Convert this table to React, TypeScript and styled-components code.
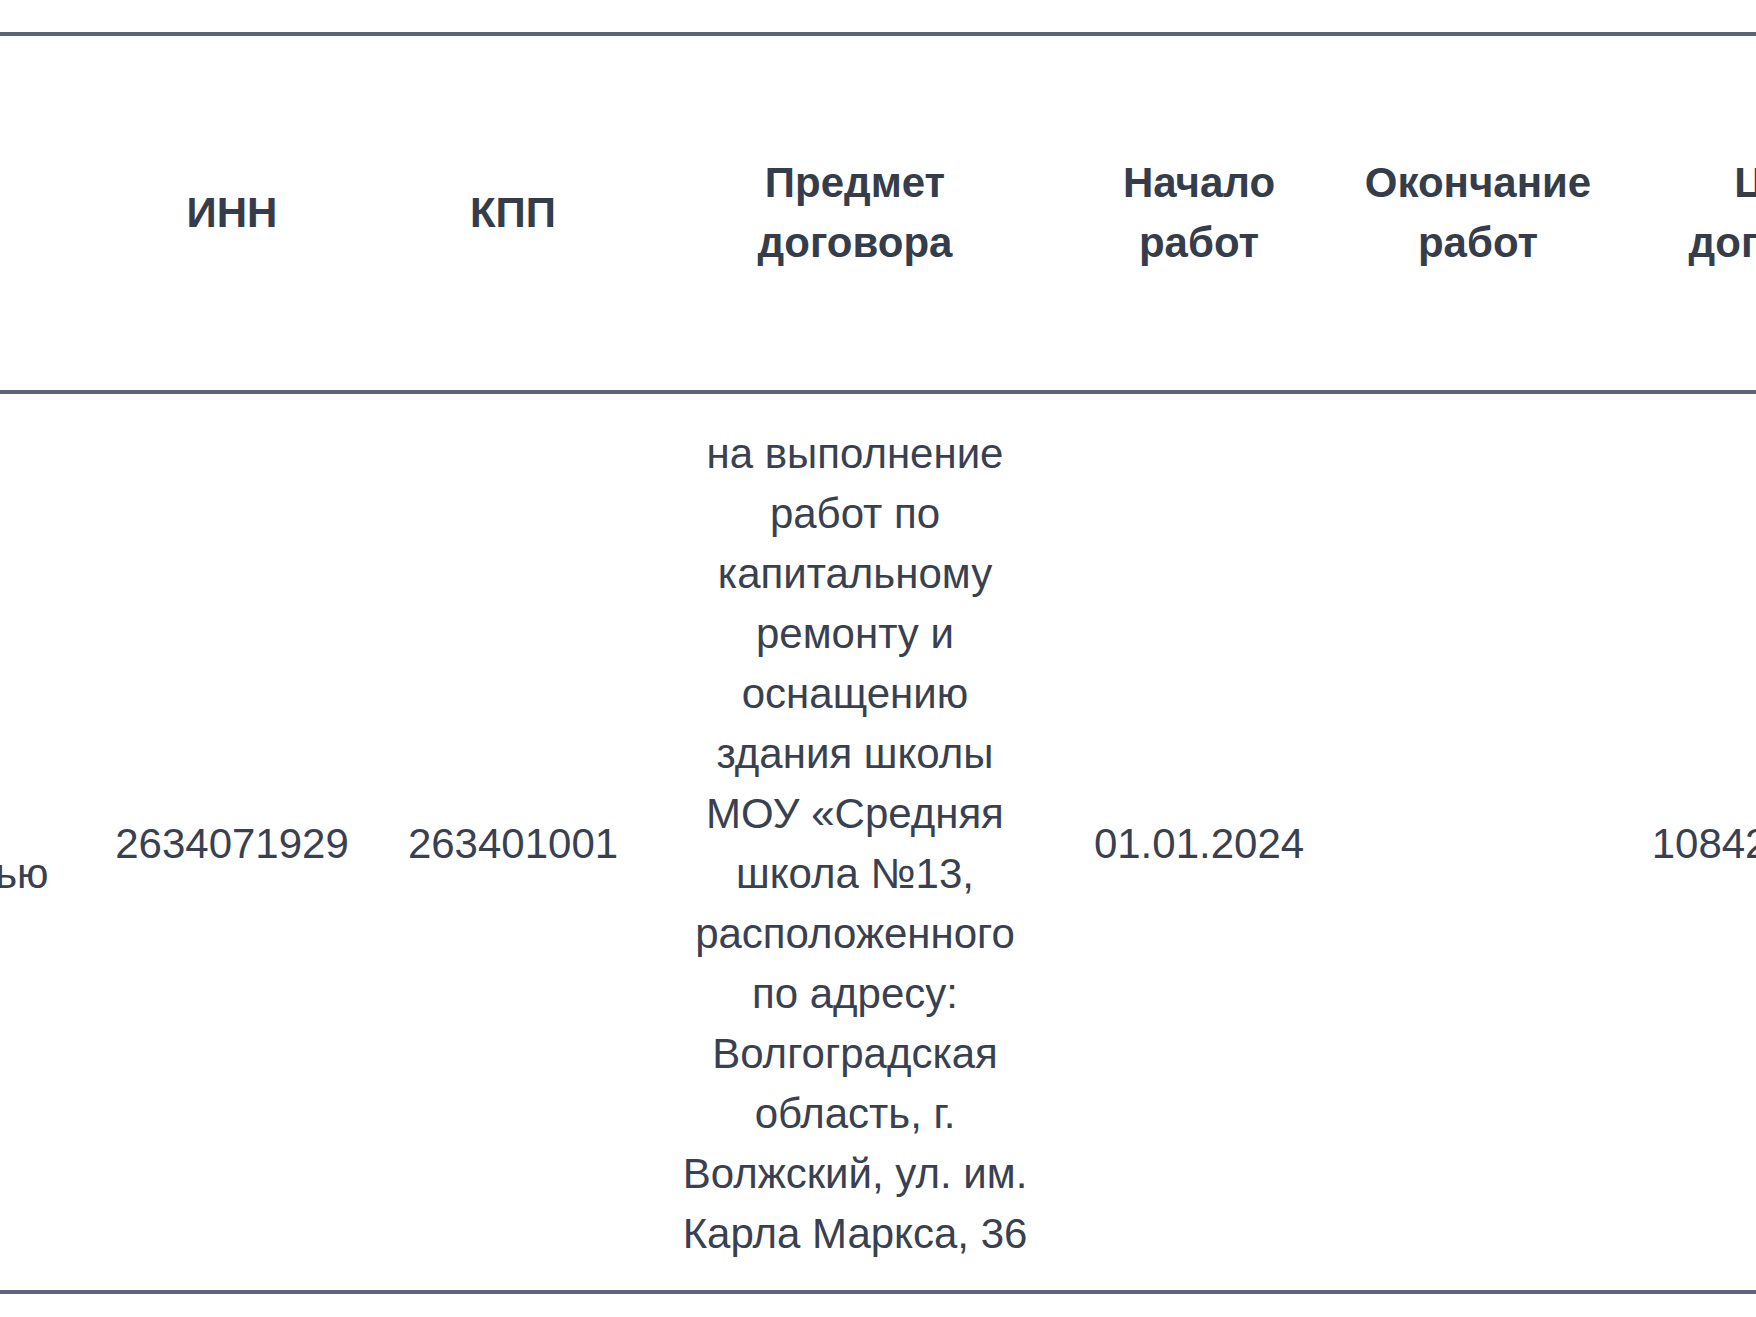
import React from 'react'
import styled, { createGlobalStyle } from 'styled-components'

const GlobalStyle = createGlobalStyle`
  html, body {
    margin: 0;
    padding: 0;
    background: #ffffff;
  }
  body {
    font-family: "Liberation Sans", Arial, sans-serif;
    overflow: hidden;
  }
`

interface Column {
  title: string
  width: number
}

const columns: Column[] = [
  { title: 'Подрядчик', width: 434 },
  { title: 'ИНН', width: 286 },
  { title: 'КПП', width: 276 },
  { title: 'Предмет договора', width: 408 },
  { title: 'Начало работ', width: 280 },
  { title: 'Окончание работ', width: 278 },
  { title: 'Цена договора', width: 338 },
]

const row = [
  'Общество с ответственностью',
  '2634071929',
  '263401001',
  'на выполнение работ по капитальному ремонту и оснащению здания школы МОУ «Средняя школа №13, расположенного по адресу: Волгоградская область, г. Волжский, ул. им. Карла Маркса, 36',
  '01.01.2024',
  '',
  '108425670,00',
]

export default function App() {
  const total = columns.reduce((sum, c) => sum + c.width, 0)

  return (
    <>
      <GlobalStyle />
      <Viewport>
        <Table $width={total} $shift={columns[0].width - 89}>
          <colgroup>
            {columns.map((c) => (
              <Col key={c.title} $width={c.width} />
            ))}
          </colgroup>
          <thead>
            <HeadRow>
              {columns.map((c) => (
                <Th key={c.title}>{c.title}</Th>
              ))}
            </HeadRow>
          </thead>
          <tbody>
            <tr>
              {row.map((value, i) => (
                <Td key={i}>{value}</Td>
              ))}
            </tr>
          </tbody>
        </Table>
      </Viewport>
    </>
  )
}

const Viewport = styled.div`
  width: 100vw;
  height: 100vh;
  overflow: hidden;
  padding-top: 32px;
  box-sizing: border-box;
`

// the table is scrolled sideways: only the tail of the first column shows
const Table = styled.table<{ $width: number; $shift: number }>`
  width: ${(p) => p.$width}px;
  margin-left: -${(p) => p.$shift}px;
  table-layout: fixed;
  border-collapse: separate;
  border-spacing: 0;
  color: #394150;
  font-size: 42px;
  line-height: 60px;
`

const Col = styled.col<{ $width: number }>`
  width: ${(p) => p.$width}px;
`

const HeadRow = styled.tr`
  height: 362px;
`

const Th = styled.th`
  padding: 24px;
  font-weight: bold;
  color: #363d4a;
  text-align: center;
  vertical-align: middle;
  border-top: 4px solid #5e6676;
  border-bottom: 4px solid #5e6676;
`

const Td = styled.td`
  padding: 30px 24px 26px;
  text-align: center;
  vertical-align: middle;
  border-bottom: 4px solid #5e6676;
`
